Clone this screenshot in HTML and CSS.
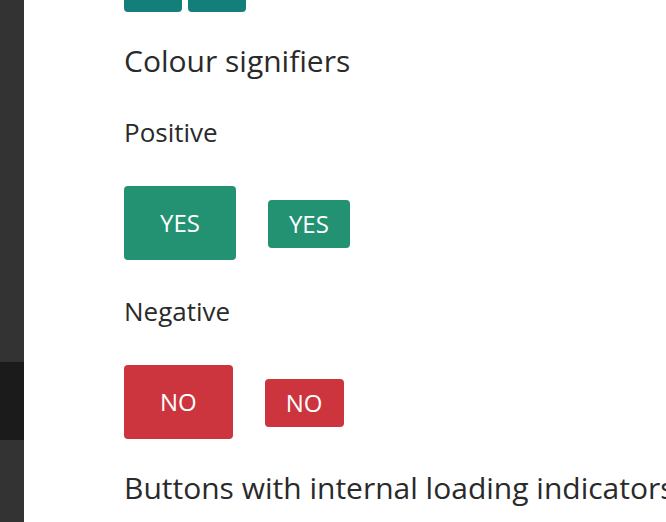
FILE: index.html
```html
<!DOCTYPE html>
<html lang="en">
<head>
<meta charset="utf-8">
<title>Buttons</title>
<link rel="stylesheet" href="styles.css">
</head>
<body>
<div class="layout">
  <aside class="sidebar">
    <div class="nav-space"></div>
    <div class="nav-active"></div>
  </aside>
  <main class="content">
    <div class="row top-row">
      <button class="btn btn-teal btn-stub"></button>
      <button class="btn btn-teal btn-stub"></button>
    </div>
    <h2 class="section-title">Colour signifiers</h2>
    <h3 class="sub-title">Positive</h3>
    <div class="row">
      <button class="btn btn-positive btn-large">YES</button>
      <button class="btn btn-positive btn-small">YES</button>
    </div>
    <h3 class="sub-title">Negative</h3>
    <div class="row">
      <button class="btn btn-negative btn-large">NO</button>
      <button class="btn btn-negative btn-small">NO</button>
    </div>
    <h2 class="section-title">Buttons with internal loading indicators</h2>
  </main>
</div>
</body>
</html>
```
FILE: styles.css
```css
html, body {
  margin: 0;
  padding: 0;
  height: 100%;
  overflow: hidden;
  background: #fff;
  font-family: "Open Sans", "Noto Sans", sans-serif;
  color: #2a2a2a;
}
.layout {
  display: flex;
  height: 522px;
}
.sidebar {
  width: 24px;
  flex: 0 0 24px;
  background: #333333;
  display: flex;
  flex-direction: column;
}
.nav-space {
  height: 362px;
}
.nav-active {
  height: 78px;
  background: #1b1b1b;
}
.content {
  padding-left: 100px;
  margin-top: -36px;
  white-space: nowrap;
}
.row {
  display: flex;
  align-items: center;
  gap: 32px;
}
.top-row {
  gap: 6px;
}
.btn {
  border: none;
  border-radius: 4px;
  color: #fff;
  font-family: "Open Sans", "Noto Sans", sans-serif;
  font-size: 24px;
  line-height: 1;
  padding: 0;
  display: flex;
  align-items: center;
  justify-content: center;
}
.btn-stub {
  width: 58px;
  height: 48px;
}
.btn-teal { background: #137e7a; }
.btn-positive { background: #239272; }
.btn-negative { background: #cc343e; }
.btn-large {
  height: 74px;
  padding: 0 36px;
}
.btn-small {
  height: 48px;
  padding: 0 21px;
  margin-top: 2px;
}
.section-title {
  font-size: 30px;
  font-weight: 400;
  margin: 29px 0 0;
  line-height: 40px;
}
.sub-title {
  font-size: 26px;
  font-weight: 400;
  margin: 34px 0 37px;
  line-height: 34px;
}
```
